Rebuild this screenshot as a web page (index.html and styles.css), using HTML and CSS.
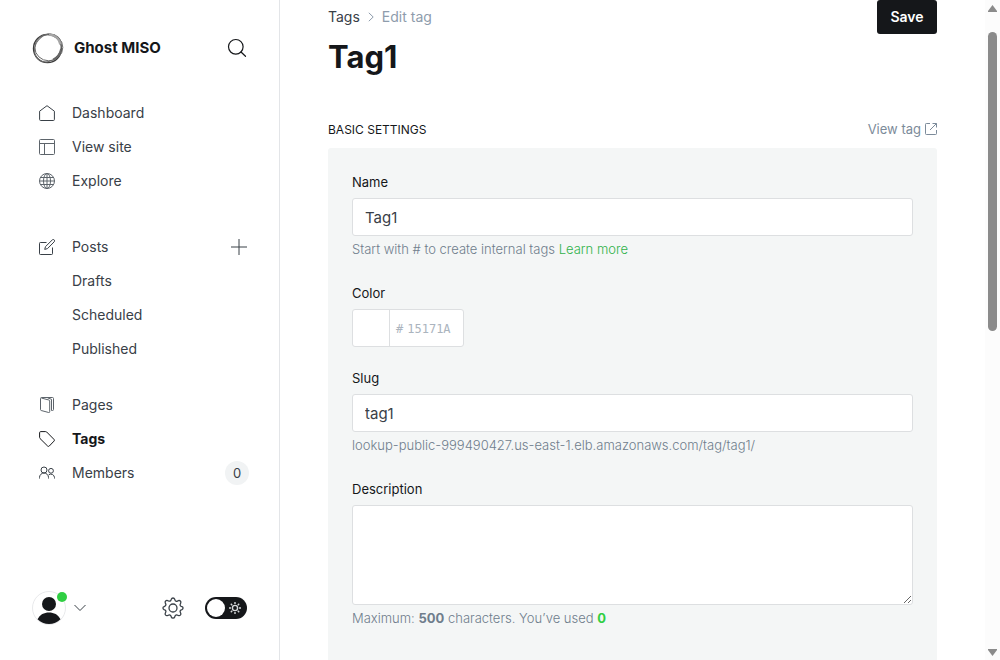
FILE: index.html
```html
<!DOCTYPE html>
<html lang="en">
<head>
<meta charset="utf-8">
<meta name="viewport" content="width=device-width, initial-scale=1">
<title>Tag1 - Ghost MISO</title>
<link rel="stylesheet" href="styles.css">
</head>
<body>
<div class="app">
  <nav class="sidebar" aria-label="Main">
    <header class="site">
      <svg class="site-logo" viewBox="0 0 32 32" fill="none">
        <circle cx="15.500" cy="16.500" r="14" stroke="#3c3c3c" stroke-width="1.400"/>
        <ellipse cx="16.800" cy="15.400" rx="14" ry="13.400" stroke="#6b6b6b" stroke-width="1"/>
        <ellipse cx="16" cy="16" rx="14.800" ry="12.400" transform="rotate(-50 16 16)" stroke="#6a6a6a" stroke-width="1"/>
        <path d="M17 2.500c6 .5 10.500 4.500 11.500 10" stroke="#a5a5a5" stroke-width="2.600"/>
        <path d="M29 17c-.8 5-3.500 8.500-8 10.500" stroke="#666" stroke-width="1.800"/>
      </svg>
      <span class="site-name">Ghost MISO</span>
      <button class="icon-button" type="button" aria-label="Search">
        <svg class="icon-20" viewBox="0 0 20 20" fill="none" stroke="#15171a" stroke-width="1.200" stroke-linecap="round"><circle cx="8.800" cy="8.800" r="7.300"/><path d="M14 14l4.500 4.300"/></svg>
      </button>
    </header>

    <ul class="menu">
      <li><a class="item" href="#dashboard"><svg class="icon" viewBox="0 0 16 16"><path d="M.6 6.200L8 .7l7.400 5.500v8.300a1 1 0 0 1-1 1H1.600a1 1 0 0 1-1-1z"/></svg><span>Dashboard</span></a></li>
      <li><a class="item" href="#site"><svg class="icon soft" viewBox="0 0 16 16"><rect x=".5" y=".5" width="15" height="15" rx="1"/><path d="M.5 4.500h15M5.500 4.500v11"/></svg><span>View site</span></a></li>
      <li><a class="item" href="#explore"><svg class="icon soft" viewBox="0 0 16 16"><circle cx="8" cy="8" r="7.500"/><ellipse cx="8" cy="8" rx="3.500" ry="7.500"/><path d="M8 .5v15M1.500 4.500h13M.5 8h15M1.500 11.500h13"/></svg><span>Explore</span></a></li>
    </ul>

    <ul class="menu menu-posts">
      <li class="row"><a class="item" href="#posts"><svg class="icon" viewBox="0 0 16 16"><path d="M7.500 3.500H1.300a.8.8 0 0 0-.8.8v10.400c0 .5.3.8.8.8h11.400c.5 0 .8-.3.8-.8V8.500"/><path d="M13.300.9a1.300 1.300 0 0 1 1.900 1.900L8.500 9.600l-2.800.8.8-2.800z"/></svg><span>Posts</span></a>
        <button class="icon-button" type="button" aria-label="New post"><svg class="icon" viewBox="0 0 16 16"><path d="M8 0v16M0 8h16"/></svg></button></li>
      <li><a class="item sub" href="#drafts">Drafts</a></li>
      <li><a class="item sub" href="#scheduled">Scheduled</a></li>
      <li><a class="item sub" href="#published">Published</a></li>
    </ul>

    <ul class="menu menu-content">
      <li><a class="item" href="#pages"><svg class="icon soft" viewBox="0 0 16 16"><path d="M1.500 1.500v11.200c0 .4.300.7.700.8l7.500 2a.8.800 0 0 0 1-.8V4a1 1 0 0 0-.8-1L2.300 1"/><path d="M1.500 1.500a1 1 0 0 1 1-1h11a1 1 0 0 1 1 1v11a1 1 0 0 1-1 1h-1V2.300L8.500.8"/></svg><span>Pages</span></a></li>
      <li><a class="item active" href="#tags" aria-current="page"><svg class="icon" viewBox="0 0 16 16"><path d="M.6 1.700A1.100 1.100 0 0 1 1.700.6h5a1.500 1.500 0 0 1 1 .4l7.300 7.400a1.200 1.200 0 0 1 0 1.700L10.300 15a1.200 1.200 0 0 1-1.700 0L1 7.500a1.500 1.500 0 0 1-.4-1z"/></svg><span>Tags</span></a></li>
      <li class="row"><a class="item" href="#members"><svg class="icon" viewBox="0 0 16 16"><circle cx="5" cy="5" r="3"/><circle cx="12" cy="5.800" r="2.400"/><path d="M.5 13.500v-1a4.500 4.500 0 0 1 9 0v1M9.700 9.800a3.700 3.700 0 0 1 5.800 2.700v1"/></svg><span>Members</span></a><span class="count">0</span></li>
    </ul>

    <footer class="account">
      <button class="user" type="button" aria-label="Your account">
        <span class="avatar">
          <svg viewBox="0 0 34 34"><circle cx="17" cy="17" r="16.500" fill="#fff" stroke="#e8e9eb"/><circle cx="17" cy="13" r="7" fill="#15171a"/><path d="M5.500 28.300C8 23.500 12 21.500 17 21.500s9 2 11.500 6.800C25.500 31.500 21.500 33 17 33s-8.500-1.500-11.500-4.700z" fill="#15171a"/></svg>
          <i class="online"></i>
        </span>
        <svg class="caret" viewBox="0 0 12 8" fill="none" stroke="#394047"><path d="M.5 1L6 6.500 11.500 1"/></svg>
      </button>
      <a class="settings" href="#settings" aria-label="Settings">
        <svg viewBox="0 0 22 22" fill="none" stroke="#394047" stroke-width="1.300" stroke-linejoin="round"><circle cx="11" cy="11" r="4"/><path d="M9.300 2.200a1.800 1.800 0 0 1 3.400 0l.3.900a1.700 1.700 0 0 0 2.400 1l.9-.4a1.800 1.800 0 0 1 2.400 2.400l-.4.900a1.700 1.700 0 0 0 1 2.400l.7.200a1.600 1.600 0 0 1 0 3l-.7.200a1.700 1.700 0 0 0-1 2.400l.4.900a1.800 1.800 0 0 1-2.400 2.400l-.9-.4a1.700 1.700 0 0 0-2.400 1l-.3.900a1.800 1.800 0 0 1-3.400 0l-.3-.9a1.700 1.700 0 0 0-2.400-1l-.9.400a1.800 1.800 0 0 1-2.400-2.400l.4-.9a1.700 1.700 0 0 0-1-2.400L2 12.600a1.600 1.600 0 0 1 0-3l.7-.3a1.700 1.700 0 0 0 1-2.400l-.4-.9a1.800 1.800 0 0 1 2.400-2.400l.9.400a1.700 1.700 0 0 0 2.400-1z"/></svg>
      </a>
      <label class="theme">
        <input type="checkbox" role="switch" aria-label="Dark mode">
        <svg viewBox="0 0 14 14" fill="none" stroke="#d5d7d9" stroke-width="1.400"><circle cx="7" cy="7" r="2.600"/><path d="M7 1v2M7 11v2M1 7h2M11 7h2M2.800 2.800l1.400 1.400M9.800 9.800l1.400 1.400M2.800 11.200l1.400-1.400M9.800 4.200l1.400-1.400"/></svg>
      </label>
    </footer>
  </nav>

  <main class="main">
    <header class="page-head">
      <div class="heading">
        <div class="crumbs"><a href="#tags">Tags</a><svg viewBox="0 0 6 10" fill="none" stroke="#8e9cac"><path d="M.8.800L5.200 5 .8 9.200"/></svg><span>Edit tag</span></div>
        <h1>Tag1</h1>
      </div>
      <button class="save" type="submit" form="tag-form">Save</button>
    </header>

    <div class="section-head">
      <h2>BASIC SETTINGS</h2>
      <a class="view" href="#tag">View tag <svg viewBox="0 0 12 12" fill="none" stroke="#7c8b9a"><path d="M5 .5H1.300a.8.8 0 0 0-.8.8v9.400c0 .5.300.8.800.8h9.400c.5 0 .8-.3.800-.8V7M7.500.5h4v4M11.500.500L5 7"/></svg></a>
    </div>

    <form class="panel" id="tag-form">
      <div class="field">
        <label for="name">Name</label>
        <input class="box" id="name" type="text" value="Tag1">
        <p>Start with # to create internal tags <a href="#learn">Learn more</a></p>
      </div>
      <div class="field">
        <label for="color">Color</label>
        <div class="color">
          <span class="swatch"></span>
          <span class="hex"><span>#</span><input id="color" type="text" placeholder="15171A"></span>
        </div>
      </div>
      <div class="field">
        <label for="slug">Slug</label>
        <input class="box" id="slug" type="text" value="tag1">
        <p>lookup-public-999490427.us-east-1.elb.amazonaws.com/tag/tag1/</p>
      </div>
      <div class="field">
        <label for="description">Description</label>
        <textarea class="box" id="description"></textarea>
        <p>Maximum: <b>500</b> characters. You’ve used <b class="used">0</b></p>
      </div>
    </form>
  </main>

  <div class="scrollbar" aria-hidden="true">
    <svg viewBox="0 0 9 7"><path d="M4.500 0L9 6v1H0V6z" fill="#8b8b8b"/></svg>
    <div class="track"><div class="thumb"></div></div>
    <svg viewBox="0 0 9 7"><path d="M0 0h9v1L4.500 7 0 1z" fill="#8b8b8b"/></svg>
  </div>
</div>
</body>
</html>
```
FILE: styles.css
```css
* { box-sizing: border-box; }

body {
  margin: 0;
  font-family: Inter, "Liberation Sans", sans-serif;
  font-size: 14px;
  color: #15171a;
  background: #fff;
}

a { color: inherit; text-decoration: none; }
button { padding: 0; border: 0; background: none; font: inherit; color: inherit; cursor: pointer; }
svg { display: block; flex: none; }
ul, p, h1, h2 { margin: 0; padding: 0; }
ul { list-style: none; }

.app { display: flex; height: 100vh; overflow: hidden; }

/* Sidebar */
.sidebar {
  display: flex;
  flex-direction: column;
  flex: none;
  width: 280px;
  padding: 32px 32px 35px;
  border-right: 1px solid #e3e5e8;
}

.site { display: flex; align-items: center; gap: 10px; height: 32px; }
.site-logo { width: 32px; height: 32px; }
.site-name { flex: 1; padding-bottom: 2px; font-size: 15px; font-weight: 700; }
.icon-20 { width: 20px; height: 20px; }

.menu { margin-top: 32px; color: #394047; font-size: 14px; }
.menu-content { margin-top: 22px; }
.row { display: flex; align-items: center; }
.item {
  display: flex;
  flex: 1;
  align-items: center;
  gap: 17px;
  height: 34px;
  padding-left: 7px;
}
.item span { padding-bottom: 2px; }
.sub { padding: 0 0 2px 40px; }
.active { color: #15171a; font-weight: 700; }
.icon { width: 16px; height: 16px; fill: none; stroke: currentColor; stroke-linejoin: round; }
.soft { stroke: #5d646b; }
.count {
  min-width: 24px;
  margin-right: -2px;
  border-radius: 12px;
  background: #f1f3f4;
  font-size: 13px;
  line-height: 24px;
  text-align: center;
}

.account { display: flex; align-items: center; margin-top: auto; height: 34px; }
.user { display: flex; align-items: center; gap: 8px; margin-right: auto; }
.avatar { position: relative; width: 34px; height: 34px; }
.online {
  position: absolute;
  top: 1px;
  right: -1px;
  width: 10px;
  height: 10px;
  border-radius: 50%;
  background: #30cf43;
}
.caret { width: 12px; height: 8px; }
.settings svg { width: 22px; height: 22px; }
.theme {
  display: flex;
  align-items: center;
  justify-content: space-between;
  width: 42px;
  height: 22px;
  margin-left: 21px;
  padding: 0 5px 0 2px;
  border-radius: 11px;
  background: #15171a;
}
.theme input {
  appearance: none;
  width: 18px;
  height: 18px;
  margin: 0;
  border-radius: 50%;
  background: #fff;
}
.theme svg { width: 14px; height: 14px; }

/* Tag editor */
.main { flex: 1; min-width: 0; padding: 0 48px; overflow: hidden; }
.page-head { display: flex; align-items: flex-start; justify-content: space-between; height: 118px; }
.crumbs { display: flex; align-items: center; gap: 8px; height: 33px; color: #394047; }
.crumbs svg { width: 6px; height: 10px; }
.crumbs span { color: #8e9cac; }
h1 { font-size: 31px; font-weight: 700; line-height: 48px; }
.save {
  width: 60px;
  height: 34px;
  padding-bottom: 2px;
  border-radius: 3px;
  background: #15171a;
  color: #fff;
  font-weight: 600;
}

.section-head { display: flex; align-items: center; justify-content: space-between; height: 30px; padding-bottom: 8px; }
h2 { font-size: 12px; font-weight: 400; }
.view { display: flex; align-items: center; gap: 4px; color: #7c8b9a; font-size: 13px; }
.view svg { width: 12px; height: 12px; }

.panel {
  display: flex;
  flex-direction: column;
  gap: 21px;
  padding: 24px 24px 32px;
  border-radius: 3px;
  background: #f4f6f6;
}
.field { display: flex; flex-direction: column; font-size: 13px; }
.field label { margin-bottom: 6px; line-height: 20px; }
.field p { margin: 3px 0; line-height: 20px; color: #6f7d8c; font-weight: 300; }
.field b { font-weight: 700; }
.field p .used { color: #30cf43; }
.field p a { color: #30b24a; }
.box {
  width: 100%;
  height: 38px;
  padding: 0 12px;
  border: 1px solid #dddfe1;
  border-radius: 3px;
  background: #fff;
  color: #394047;
  font: 15px Inter, sans-serif;
}
textarea.box { height: 100px; resize: vertical; }
.color {
  display: flex;
  width: 112px;
  height: 38px;
  border: 1px solid #dddfe1;
  border-radius: 3px;
  background: #fff;
}
.swatch { width: 37px; border-right: 1px solid #dddfe1; }
.hex {
  display: flex;
  flex: 1;
  align-items: center;
  gap: 4px;
  padding: 2px 6px 0;
  color: #abb4be;
  font: 12px "DejaVu Sans Mono", monospace;
}
.hex input { flex: 1; width: 0; padding: 0; border: 0; background: none; font: inherit; }
.hex input::placeholder { color: #abb4be; opacity: 1; }

/* Page scrollbar */
.scrollbar {
  display: flex;
  flex-direction: column;
  align-items: center;
  gap: 20px;
  flex: none;
  width: 15px;
  padding: 5px 0 4px;
  background: #fcfcfc;
}
.scrollbar svg { width: 9px; height: 7px; }
.track { flex: 1; }
.thumb { width: 9px; height: 50%; border-radius: 5px; background: #8b8b8b; }
```
